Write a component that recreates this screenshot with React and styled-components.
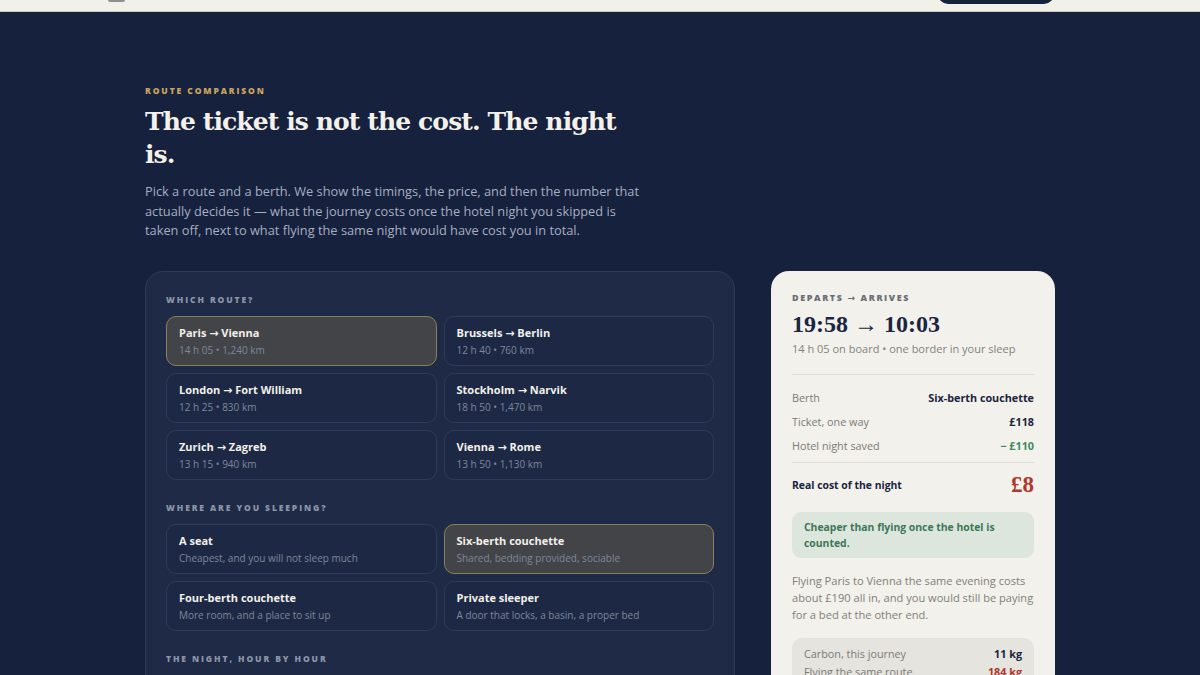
import styled, { createGlobalStyle } from 'styled-components'

const GlobalStyle = createGlobalStyle`
  body {
    margin: 0;
    background: #16213d;
    font-family: "Open Sans", "DejaVu Sans", sans-serif;
    -webkit-font-smoothing: antialiased;
  }
`

const serif = `"Liberation Serif", "DejaVu Serif", serif`
const display = `"DejaVu Serif", "Liberation Serif", serif`

const TopBar = styled.header`
  box-sizing: border-box;
  height: 12px;
  overflow: hidden;
  background: #f1f0e9;
  border-bottom: 1px solid #c9c8c2;
  display: flex;
  align-items: flex-end;
  padding: 0 146px 7px 108px;
`

const Mark = styled.span`
  align-self: flex-start;
  width: 17px;
  height: 2px;
  border-radius: 0 0 3px 3px;
  background: #8d8f96;
`

const NavButton = styled.span`
  flex: none;
  margin-left: auto;
  width: 116px;
  height: 30px;
  border-radius: 10px;
  background: #16213d;
`

const Main = styled.main`
  width: 910px;
  margin: 0 auto;
  padding-top: 73px;
`

const Eyebrow = styled.div`
  font-size: 8.5px;
  font-weight: 800;
  letter-spacing: 1.9px;
  text-transform: uppercase;
  color: ${({ muted }) => (muted ? '#8c94a8' : '#c9a35f')};
  line-height: 12px;
`

const Title = styled.h1`
  margin: 8px 0 0;
  max-width: 490px;
  font-family: ${display};
  font-weight: 700;
  font-size: 25px;
  line-height: 33px;
  letter-spacing: -0.9px;
  color: #f4f1ea;
`

const Lede = styled.p`
  margin: 11px 0 0;
  max-width: 496px;
  font-size: 12.8px;
  line-height: 19.5px;
  color: #a6aec1;
`

const Columns = styled.div`
  margin-top: 30px;
  display: grid;
  grid-template-columns: 590px 284px;
  justify-content: space-between;
  align-items: start;
`

const Panel = styled.section`
  background: #1e2a46;
  border: 1px solid #2e3a56;
  border-radius: 18px;
  padding: 22px 20px 40px;
`

const Group = styled.div`
  & + & {
    margin-top: 22px;
  }
`

const Options = styled.div`
  margin-top: 10px;
  display: grid;
  grid-template-columns: 1fr 1fr;
  gap: 7px;
`

const Option = styled.button`
  all: unset;
  box-sizing: border-box;
  height: 50px;
  padding: 8px 12px;
  border-radius: 10px;
  border: 1px solid ${({ active }) => (active ? '#8c7f5c' : '#2f3b58')};
  background: ${({ active }) => (active ? '#434447' : '#1d2944')};
  display: flex;
  flex-direction: column;
  cursor: pointer;
`

const OptionName = styled.span`
  font-size: 11px;
  font-weight: 700;
  line-height: 16px;
  color: #f2f0ea;
`

const OptionMeta = styled.span`
  margin-top: 3px;
  font-size: 10px;
  line-height: 13px;
  color: #7e879c;
`

const Summary = styled.aside`
  background: #f2f1eb;
  border-radius: 18px;
  padding: 21px 21px 40px;
`

const SummaryLabel = styled.div`
  font-size: 9px;
  font-weight: 800;
  letter-spacing: 1.6px;
  line-height: 12px;
  color: #6c6e76;
`

const Times = styled.div`
  margin-top: 5px;
  font-family: ${serif};
  font-weight: 700;
  font-size: 24px;
  line-height: 30px;
  color: #1b2440;
`

const Small = styled.div`
  margin-top: 3px;
  font-size: 11px;
  line-height: 14px;
  color: #83837f;
`

const Rule = styled.hr`
  margin: ${({ gap }) => gap || '0'};
  border: 0;
  border-top: 1px solid #dedcd4;
`

const Rows = styled.div`
  padding: 11px 0 4px;
`

const Row = styled.div`
  display: flex;
  justify-content: space-between;
  align-items: center;
  height: 24px;
  font-size: 10.8px;
  color: #7b7b78;
`

const Value = styled.span`
  font-weight: 700;
  color: ${({ tone }) => tone || '#1b2440'};
`

const Total = styled.div`
  margin-top: 9px;
  display: flex;
  justify-content: space-between;
  align-items: center;
  height: 26px;
  font-size: 10.4px;
  font-weight: 700;
  color: #1b2440;
`

const Price = styled.span`
  font-family: ${serif};
  font-size: 23px;
  font-weight: 700;
  color: #b2372f;
`

const Verdict = styled.div`
  margin-top: 14px;
  padding: 7px 12px;
  border-radius: 9px;
  background: #dde6dd;
  font-size: 10.4px;
  font-weight: 700;
  line-height: 16px;
  color: #3b7757;
`

const Note = styled.p`
  margin: 14px 0 0;
  font-size: 11.1px;
  line-height: 17px;
  color: #7f7f7b;
`

const Carbon = styled.div`
  margin-top: 15px;
  padding: 7px 12px;
  border-radius: 10px;
  background: #e5e4de;
`

const CarbonRow = styled(Row)`
  height: 18px;
`

const routes = [
  { name: 'Paris → Vienna', meta: '14 h 05 • 1,240 km' },
  { name: 'Brussels → Berlin', meta: '12 h 40 • 760 km' },
  { name: 'London → Fort William', meta: '12 h 25 • 830 km' },
  { name: 'Stockholm → Narvik', meta: '18 h 50 • 1,470 km' },
  { name: 'Zurich → Zagreb', meta: '13 h 15 • 940 km' },
  { name: 'Vienna → Rome', meta: '13 h 50 • 1,130 km' },
]

const berths = [
  { name: 'A seat', meta: 'Cheapest, and you will not sleep much' },
  { name: 'Six-berth couchette', meta: 'Shared, bedding provided, sociable' },
  { name: 'Four-berth couchette', meta: 'More room, and a place to sit up' },
  { name: 'Private sleeper', meta: 'A door that locks, a basin, a proper bed' },
]

const Picker = ({ label, items, selected }) => (
  <Group>
    <Eyebrow muted>{label}</Eyebrow>
    <Options>
      {items.map(item => (
        <Option key={item.name} active={item.name === selected}>
          <OptionName>{item.name}</OptionName>
          <OptionMeta>{item.meta}</OptionMeta>
        </Option>
      ))}
    </Options>
  </Group>
)

export default function App() {
  return (
    <>
      <GlobalStyle />
      <TopBar>
        <Mark />
        <NavButton />
      </TopBar>
      <Main>
        <Eyebrow>Route comparison</Eyebrow>
        <Title>The ticket is not the cost. The night is.</Title>
        <Lede>
          Pick a route and a berth. We show the timings, the price, and then the number that
          actually decides it — what the journey costs once the hotel night you skipped is
          taken off, next to what flying the same night would have cost you in total.
        </Lede>
        <Columns>
          <Panel>
            <Picker label="Which route?" items={routes} selected="Paris → Vienna" />
            <Picker label="Where are you sleeping?" items={berths} selected="Six-berth couchette" />
            <Group>
              <Eyebrow muted>The night, hour by hour</Eyebrow>
            </Group>
          </Panel>
          <Summary>
            <SummaryLabel>DEPARTS → ARRIVES</SummaryLabel>
            <Times>19:58 → 10:03</Times>
            <Small>14 h 05 on board • one border in your sleep</Small>
            <Rule gap="18px 0 0" />
            <Rows>
              <Row>Berth <Value>Six-berth couchette</Value></Row>
              <Row>Ticket, one way <Value>£118</Value></Row>
              <Row>Hotel night saved <Value tone="#3f8a5f">− £110</Value></Row>
            </Rows>
            <Rule />
            <Total>Real cost of the night <Price>£8</Price></Total>
            <Verdict>Cheaper than flying once the hotel is counted.</Verdict>
            <Note>
              Flying Paris to Vienna the same evening costs about £190 all in, and you would
              still be paying for a bed at the other end.
            </Note>
            <Carbon>
              <CarbonRow>Carbon, this journey <Value>11 kg</Value></CarbonRow>
              <CarbonRow>Flying the same route <Value tone="#b2372f">184 kg</Value></CarbonRow>
            </Carbon>
          </Summary>
        </Columns>
      </Main>
    </>
  )
}
